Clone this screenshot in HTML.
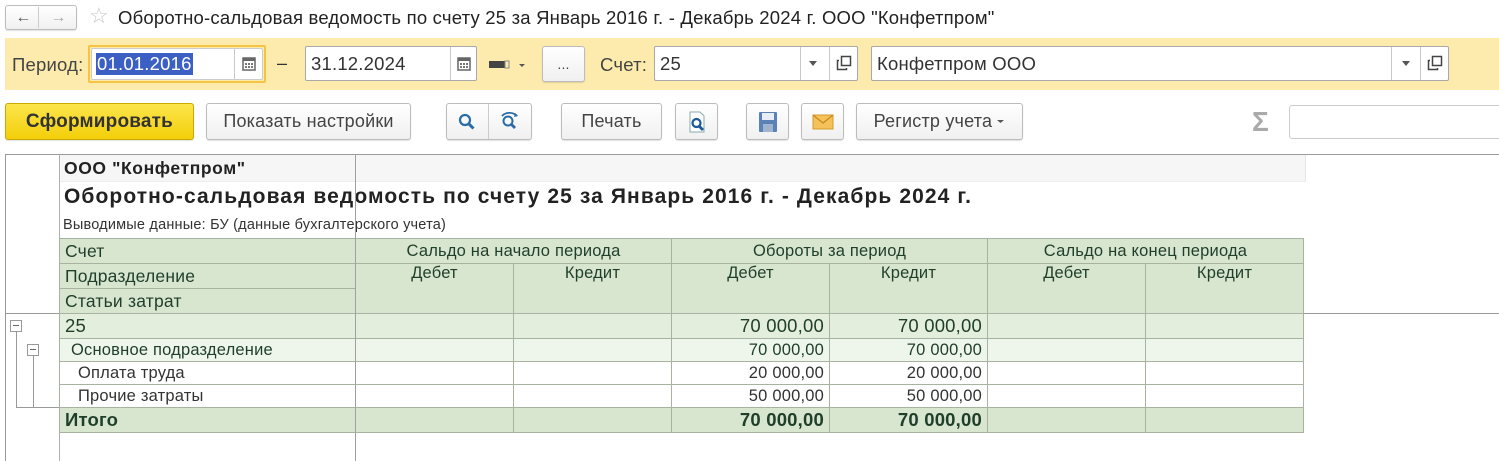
<!DOCTYPE html>
<html><head><meta charset="utf-8"><style>
*{box-sizing:border-box;margin:0;padding:0}
body{width:1499px;height:461px;background:#fff;font-family:"Liberation Sans",Arial,sans-serif;color:#333;position:relative;overflow:hidden;font-size:15px;letter-spacing:0.2px}
.a{position:absolute;white-space:nowrap}
.btn{position:absolute;border:1px solid #bcbcbc;border-radius:3px;background:linear-gradient(#fff,#f0f0f0);box-shadow:0 1px 1px rgba(0,0,0,.12);display:flex;align-items:center;justify-content:center;font-size:18px;color:#444;white-space:nowrap}
.inp{position:absolute;background:#fff;border:1px solid #a9a9a9;border-radius:2px;font-size:18.5px;color:#333;padding-left:5px;display:flex;align-items:center}
.sep{position:absolute;top:0;bottom:0;width:1px;background:#c9c9c9}
table{position:absolute;left:59px;top:238px;border-collapse:collapse;table-layout:fixed;color:#1f3f2a}
td{border:1px solid #a7b3a0;font-size:16.5px;padding:0 5px;white-space:nowrap;overflow:hidden}
.h{background:#d8e5cf;text-align:center;font-size:16.5px}
.r{text-align:right}
.big{font-size:18.5px}
</style></head><body>
<div class="btn" style="left:5px;top:5px;width:72px;height:25px;border-radius:3px;justify-content:space-around;font-size:16px;color:#555;font-weight:bold"><span>←</span><span style="color:#aaa">→</span></div>
<div class="a" style="left:38px;top:7px;width:1px;height:21px;background:#ccc"></div>
<div class="a" style="left:89px;top:3px;font-size:22px;color:#c8c8c8">☆</div>
<div class="a" style="left:118px;top:7px;font-size:18.5px;letter-spacing:0.2px;color:#222">Оборотно-сальдовая ведомость по счету 25 за Январь 2016 г. - Декабрь 2024 г. ООО "Конфетпром"</div>
<div class="a" style="left:5px;top:38px;width:1494px;height:52px;background:#fcebac"></div>
<div class="a" style="left:12px;top:54px;font-size:18.5px;color:#444">Период:</div>
<div class="a" style="left:88px;top:45px;width:178px;height:38px;border:2px solid #f4c542;border-radius:2px"></div>
<div class="inp" style="left:91px;top:48px;width:172px;height:32px;border-color:#ccc">
<span style="background:#3b5fc3;color:#fff;padding:0 1px;margin-left:-1px">01.01.2016</span>
<div class="sep" style="left:142px"></div>
<svg class="a" style="left:150px;top:7px" width="14" height="15" viewBox="0 0 14 15"><rect x="1" y="2" width="12" height="12" fill="none" stroke="#666" stroke-width="1.5"/><rect x="1" y="2" width="12" height="3" fill="#666"/><g fill="#777"><rect x="3" y="7" width="2" height="2"/><rect x="6" y="7" width="2" height="2"/><rect x="9" y="7" width="2" height="2"/><rect x="3" y="10" width="2" height="2"/><rect x="6" y="10" width="2" height="2"/><rect x="9" y="10" width="2" height="2"/></g></svg>
</div>
<div class="a" style="left:277px;top:53px;font-size:18px;color:#333">–</div>
<div class="inp" style="left:305px;top:46px;width:172px;height:35px">31.12.2024
<div class="sep" style="left:144px"></div>
<svg class="a" style="left:151px;top:9px" width="14" height="15" viewBox="0 0 14 15"><rect x="1" y="2" width="12" height="12" fill="none" stroke="#666" stroke-width="1.5"/><rect x="1" y="2" width="12" height="3" fill="#666"/><g fill="#777"><rect x="3" y="7" width="2" height="2"/><rect x="6" y="7" width="2" height="2"/><rect x="9" y="7" width="2" height="2"/><rect x="3" y="10" width="2" height="2"/><rect x="6" y="10" width="2" height="2"/><rect x="9" y="10" width="2" height="2"/></g></svg>
</div>
<svg class="a" style="left:488px;top:59px" width="40" height="12"><rect x="1" y="2" width="16" height="7" fill="#444"/><rect x="17" y="2" width="4" height="7" fill="none" stroke="#888"/><path d="M31 5h6l-3 3z" fill="#555"/></svg>
<div class="btn" style="left:542px;top:46px;width:43px;height:36px;font-size:14px">...</div>
<div class="a" style="left:600px;top:54px;font-size:18.5px;color:#444">Счет:</div>
<div class="inp" style="left:654px;top:46px;width:204px;height:35px">25
<div class="sep" style="left:145px"></div><div class="sep" style="left:174px"></div>
<svg class="a" style="left:154px;top:14px" width="8" height="6"><path d="M0 0h8l-4 5z" fill="#555"/></svg>
<svg class="a" style="left:181px;top:8px" width="16" height="16"><rect x="5.5" y="1.5" width="9" height="9" fill="none" stroke="#444" stroke-width="1.5"/><path d="M3 5.5H1.5v9h9V13" fill="none" stroke="#444" stroke-width="1.5"/></svg>
</div>
<div class="inp" style="left:871px;top:46px;width:578px;height:35px">Конфетпром ООО
<div class="sep" style="left:519px"></div><div class="sep" style="left:548px"></div>
<svg class="a" style="left:530px;top:14px" width="8" height="6"><path d="M0 0h8l-4 5z" fill="#555"/></svg>
<svg class="a" style="left:555px;top:8px" width="16" height="16"><rect x="5.5" y="1.5" width="9" height="9" fill="none" stroke="#444" stroke-width="1.5"/><path d="M3 5.5H1.5v9h9V13" fill="none" stroke="#444" stroke-width="1.5"/></svg>
</div>
<div class="btn" style="left:5px;top:103px;width:189px;height:37px;background:linear-gradient(#fbe54b,#f3cf0a);border-color:#c9a900;font-weight:bold;font-size:19px;color:#333">Сформировать</div>
<div class="btn" style="left:206px;top:103px;width:205px;height:37px">Показать настройки</div>
<div class="btn" style="left:446px;top:103px;width:86px;height:37px"></div>
<div class="a" style="left:488px;top:104px;width:1px;height:35px;background:#ccc"></div>
<svg class="a" style="left:457px;top:112px" width="20" height="20"><circle cx="8" cy="8" r="5" fill="none" stroke="#2a6ca8" stroke-width="2.2"/><path d="M11.5 11.5l5 5" stroke="#2a6ca8" stroke-width="3"/></svg>
<svg class="a" style="left:499px;top:110px" width="22" height="22"><path d="M3 6a9 7 0 0 1 15 0" fill="none" stroke="#2a6ca8" stroke-width="1.8"/><path d="M16 3l3 3-4 1z" fill="#2a6ca8"/><circle cx="9" cy="11" r="4.5" fill="none" stroke="#2a6ca8" stroke-width="2"/><path d="M12 14l4 4" stroke="#2a6ca8" stroke-width="2.8"/></svg>
<div class="btn" style="left:561px;top:103px;width:101px;height:37px">Печать</div>
<div class="btn" style="left:675px;top:103px;width:43px;height:37px"><svg width="18" height="22"><path d="M2 1h10l4 4v16H2z" fill="#fff" stroke="#8aa"/><circle cx="8.5" cy="12" r="4" fill="none" stroke="#1c5a9c" stroke-width="2.2"/><path d="M11 15l4 4" stroke="#1c5a9c" stroke-width="2.8"/></svg></div>
<div class="btn" style="left:746px;top:103px;width:43px;height:37px"><svg width="20" height="22"><rect x="1" y="1" width="18" height="20" fill="#5b82b6" rx="1"/><rect x="4" y="2" width="12" height="7" fill="#e8eef6"/><rect x="5" y="13" width="10" height="8" fill="#9fb4cf"/></svg></div>
<div class="btn" style="left:801px;top:103px;width:43px;height:37px"><svg width="22" height="16"><rect x="1" y="1" width="20" height="14" fill="#f4c15a" stroke="#d89a2a"/><path d="M1 1l10 8 10-8" fill="none" stroke="#c98a20" stroke-width="1.3"/></svg></div>
<div class="btn" style="left:856px;top:103px;width:167px;height:37px">Регистр учета&nbsp;<svg width="8" height="6"><path d="M0 1h7l-3.5 3z" fill="#555"/></svg></div>
<div class="a" style="left:1252px;top:106px;font-size:28px;color:#aaa;font-weight:bold">Σ</div>
<div class="a" style="left:1289px;top:105px;width:215px;height:34px;border:1px solid #ccc;border-radius:3px"></div>
<div class="a" style="left:5px;top:154px;width:1494px;height:1px;background:#9a9a9a"></div>
<div class="a" style="left:59px;top:155px;width:1247px;height:27px;background:#f6f6f6;border-right:1px solid #e6e6e6;border-bottom:1px solid #eee"></div>
<div class="a" style="left:5px;top:154px;width:1px;height:307px;background:#9a9a9a"></div>
<div class="a" style="left:59px;top:154px;width:1px;height:307px;background:#b0b0b0"></div>
<div class="a" style="left:5px;top:313px;width:1494px;height:1px;background:#9a9a9a"></div>
<div class="a" style="left:64px;top:158px;font-size:17.5px;letter-spacing:0.6px;font-weight:bold;color:#222">ООО "Конфетпром"</div>
<div class="a" style="left:64px;top:185px;font-size:21px;letter-spacing:1.1px;font-weight:bold;color:#222">Оборотно-сальдовая ведомость по счету 25 за Январь 2016 г. - Декабрь 2024 г.</div>
<div class="a" style="left:63px;top:217px;font-size:14.5px;color:#333">Выводимые данные: БУ (данные бухгалтерского учета)</div>
<table>
<colgroup><col style="width:296px"><col style="width:158px"><col style="width:158px"><col style="width:158px"><col style="width:158px"><col style="width:158px"><col style="width:158px"></colgroup>
<tr style="height:25px"><td class="h" style="text-align:left;font-size:17.5px">Счет</td><td class="h" colspan="2">Сальдо на начало периода</td><td class="h" colspan="2">Обороты за период</td><td class="h" colspan="2">Сальдо на конец периода</td></tr>
<tr style="height:25px"><td class="h" style="text-align:left;font-size:17.5px">Подразделение</td><td class="h" rowspan="2" style="vertical-align:top">Дебет</td><td class="h" rowspan="2" style="vertical-align:top">Кредит</td><td class="h" rowspan="2" style="vertical-align:top">Дебет</td><td class="h" rowspan="2" style="vertical-align:top">Кредит</td><td class="h" rowspan="2" style="vertical-align:top">Дебет</td><td class="h" rowspan="2" style="vertical-align:top">Кредит</td></tr>
<tr style="height:25px"><td class="h" style="text-align:left;font-size:17.5px">Статьи затрат</td></tr>
<tr style="height:25px;background:#e4eedc"><td class="big">25</td><td></td><td></td><td class="r big">70 000,00</td><td class="r big">70 000,00</td><td></td><td></td></tr>
<tr style="height:23px;background:#eef5ea"><td style="padding-left:11px">Основное подразделение</td><td></td><td></td><td class="r">70 000,00</td><td class="r">70 000,00</td><td></td><td></td></tr>
<tr style="height:23px;color:#333"><td style="padding-left:18px">Оплата труда</td><td></td><td></td><td class="r">20 000,00</td><td class="r">20 000,00</td><td></td><td></td></tr>
<tr style="height:23px;color:#333"><td style="padding-left:18px">Прочие затраты</td><td></td><td></td><td class="r">50 000,00</td><td class="r">50 000,00</td><td></td><td></td></tr>
<tr style="height:25px;background:#d8e5cf;font-weight:bold"><td class="big">Итого</td><td></td><td></td><td class="r big">70 000,00</td><td class="r big">70 000,00</td><td></td><td></td></tr>
</table>
<div class="a" style="left:355px;top:154px;width:1px;height:307px;background:#a0a0a0"></div>
<div class="a" style="left:16px;top:331px;width:1px;height:77px;background:#999"></div>
<div class="a" style="left:33px;top:355px;width:1px;height:53px;background:#999"></div>
<div class="a" style="left:16px;top:407px;width:43px;height:1px;background:#999"></div>
<div class="a" style="left:10px;top:320px;width:12px;height:12px;border:1px solid #999;background:#fff"><div style="margin:4px 2px;height:1px;background:#666"></div></div>
<div class="a" style="left:27px;top:344px;width:12px;height:12px;border:1px solid #999;background:#fff"><div style="margin:4px 2px;height:1px;background:#666"></div></div>
</body></html>
